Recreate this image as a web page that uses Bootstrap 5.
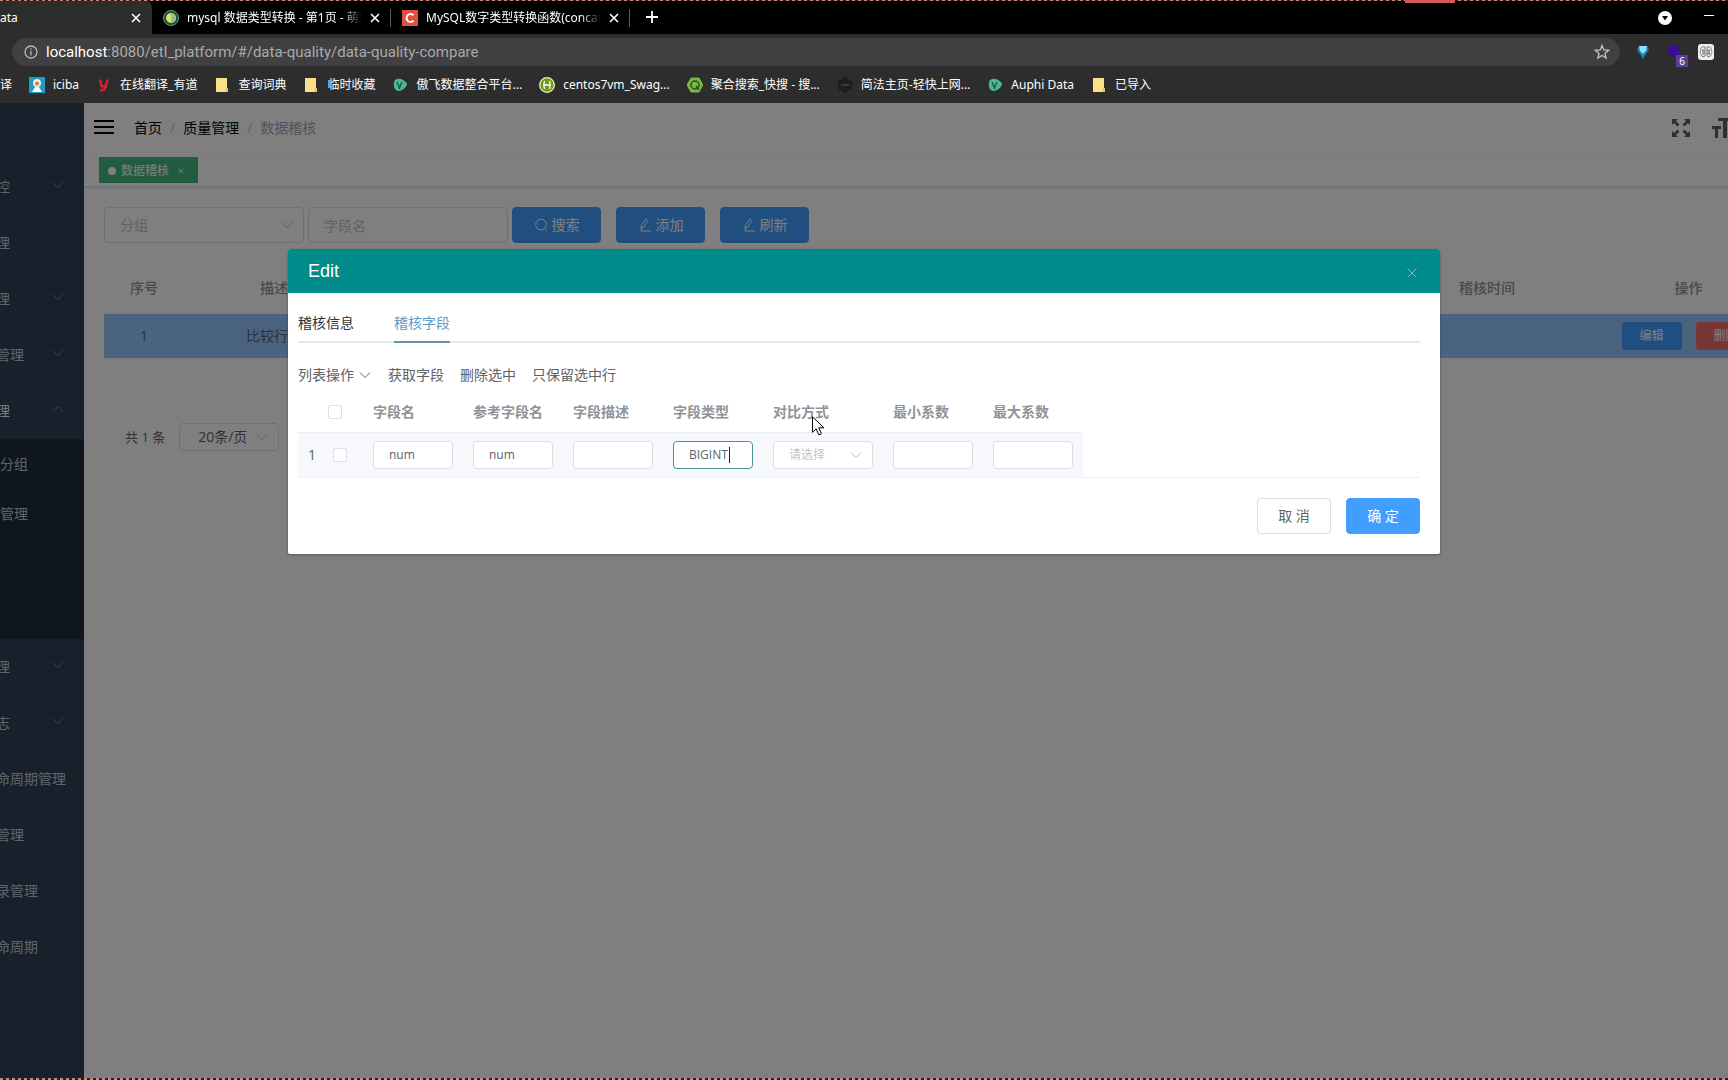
<!DOCTYPE html>
<html lang="zh-CN">
<head>
<meta charset="utf-8">
<meta name="viewport" content="width=device-width, initial-scale=1">
<title>Auphi Data</title>
<link href="https://cdn.jsdelivr.net/npm/bootstrap@5.3.0/dist/css/bootstrap.min.css" rel="stylesheet">
<style>
  :root { --line: #dcdfe6; --hint: #c0c4cc; --blue: #409eff; }
  body { font-family: "Open Sans", "Noto Sans CJK SC", sans-serif; font-size: 14px; line-height: 20px; color: #606266; }
  a { text-decoration: none; color: inherit; }
  svg { flex: none; display: block; }
  .ui-font { font-family: "Liberation Sans", "Noto Sans CJK SC", sans-serif; }

  /* browser chrome */
  .chrome { background: #2d2d2d; color: #fff; font-family: "Noto Sans", "Noto Sans CJK SC", sans-serif; font-size: 12px; line-height: 16px; }
  .tabstrip { height: 34px; background: #000; }
  .tabstrip > * { padding-top: 2px; }
  .tab-on { width: 152px; background: #2d2d2d; border-radius: 0 8px 0 0; padding-right: 11px; }
  .tab-off { width: 239px; padding-left: 11px; padding-right: 12px; }
  .tab-off::after { content: ""; align-self: center; width: 1px; height: 18px; background: #5a5a5a; margin-right: -12px; margin-left: 2px; }
  .tab-title { overflow: hidden; white-space: nowrap; -webkit-mask-image: linear-gradient(90deg, #000 88%, transparent); mask-image: linear-gradient(90deg, #000 88%, transparent); }
  .plain { background: none; border: 0; padding: 0; color: inherit; }
  .win-tools { padding-right: 6px; }
  .toolbar { height: 36px; padding: 0 14px 0 8px; }
  .omnibox { height: 28px; border-radius: 14px; background: #403f41; font-family: Roboto, sans-serif; font-size: 15px; }
  .omnibox .rest { color: #aaa; }
  .ext-badge { right: -6px; bottom: -7px; width: 12px; height: 12px; font-size: 10px; line-height: 12px; background: #5b3f95; text-align: center; }
  .bookmarks { height: 33px; gap: 17px; white-space: nowrap; overflow: hidden; padding-bottom: 4px; }

  /* application */
  .app { background: #fff; }
  .side { width: 84px; background: #304156; color: #bfcbd9; overflow: hidden; padding-top: 56px; line-height: 56px; }
  .side a { height: 56px; margin-left: -4px; padding-right: 20px; white-space: nowrap; }
  .side a svg { margin-bottom: 4px; opacity: .5; }
  .side .on { color: #f4f4f5; }
  .submenu { background: #1f2d3d; height: 200px; line-height: 50px; }
  .submenu a { height: 50px; margin-left: 0; }
  .topline { height: 50px; padding-left: 10px; }
  .crumbs { gap: 8px; padding-left: 4px; }
  .crumbs .sep { color: var(--hint); }
  .crumbs .here { color: #97a8be; }
  .topline .tools { gap: 22px; color: #5a5e66; overflow: hidden; }
  .tagline { height: 34px; padding: 4px 15px; border-bottom: 1px solid #d8dce5; box-shadow: 0 1px 3px rgba(0,0,0,.12); }
  .tag-on { height: 26px; width: 99px; background: #42b983; color: #fff; font-size: 12px; padding: 2px 0 0 9px; gap: 5px; }
  .tag-on i { width: 8px; height: 8px; border-radius: 50%; background: #fff; }
  .workspace { padding: 20px; padding-right: 0; overflow: hidden; }
  .field { height: 36px; width: 200px; border: 1px solid var(--line); border-radius: 4px; padding: 0 15px; background-color: #fff; color: #606266; font-size: 14px; outline: 0; }
  .field::placeholder { color: var(--hint); opacity: 1; }
  select.field { appearance: none; color: var(--hint); background-repeat: no-repeat; background-position: right 10px center; background-image: url("data:image/svg+xml,%3Csvg xmlns='http://www.w3.org/2000/svg' width='12' height='12' fill='none' stroke='%23b4b8c0'%3E%3Cpath d='M1 3.5l5 5 5-5'/%3E%3C/svg%3E"); }
  .field-sm { height: 28px; width: 80px; font-size: 12px; vertical-align: middle; }
  .act { --bs-btn-bg: var(--blue); --bs-btn-border-color: var(--blue); --bs-btn-font-size: 14px; --bs-btn-line-height: 20px; --bs-btn-border-radius: 4px; --bs-btn-padding-x: 0; --bs-btn-padding-y: 0; height: 36px; width: 89px; }
  .act-sm { width: 60px; height: 28px; --bs-btn-font-size: 12px; --bs-btn-border-radius: 3px; }
  .act-red { --bs-btn-bg: #f56c6c; --bs-btn-border-color: #f56c6c; }
  .act-ghost { --bs-btn-bg: #fff; --bs-btn-border-color: #dcdfe6; --bs-btn-color: #606266; }
  .act-end { width: 74px; }
  .act-row { gap: 15px; }
  .act-pair { gap: 14px; }
  .grid-main { table-layout: fixed; width: calc(100% + 77px); margin-top: 20px; text-align: center; white-space: nowrap; }
  .grid-main th { height: 51px; color: #909399; font-weight: 500; padding-bottom: 2px; }
  .grid-main td { height: 44px; background: #94c8fe; padding: 0; }
  .pager { margin-top: 65px; padding-left: 21px; gap: 14px; font-size: 13px; }
  .pager .field { width: 100px; height: 28px; padding: 0 18px; color: #606266; }

  /* dialog */
  .veil { inset: 0; background: rgba(0,0,0,.5); padding-top: 146px; z-index: 5; }
  .dialog { width: 66.667%; background: #fff; border-radius: 2px; box-shadow: 0 1px 3px rgba(0,0,0,.3); overflow: hidden; }
  .dialog-head { height: 44px; background: #008b8b; color: #fff; font-size: 18px; padding: 0 22px 0 20px; }
  .dialog-head button { padding-top: 4px; color: #8fb5ba; }
  .dialog-main { padding: 10px 20px 20px 10px; }
  .pane-tabs { gap: 40px; height: 40px; border-bottom: 2px solid #e4e7ed; color: #303133; line-height: 40px; }
  .pane-tabs .on { height: 40px; color: #5a9bc8; border-bottom: 2px solid #5f97ae; }
  .ops { gap: 16px; height: 64px; margin-bottom: -9px; }
  .grid-fields { width: 785px; table-layout: fixed; white-space: nowrap; }
  .grid-fields th { height: 34px; color: #909399; font-weight: 700; padding: 0 10px 6px; }
  .grid-fields td { height: 45px; padding: 0 10px; background: #f7f8fc; border-top: 1px solid #ebeef5; }
  .grid-fields th.tick { padding-left: 5px; }
  .tickbox { appearance: none; width: 14px; height: 14px; border: 1px solid var(--line); border-radius: 2px; background: #fff; display: block; margin: 0; }
  .field-on { border-color: #4a9496; }
  .caret { left: 56px; top: 6px; width: 1px; height: 16px; background: #222; }
  .grid-wrap { border-bottom: 1px solid #ebeef5; }
  .dialog-end { padding-top: 20px; }
  .pointer { left: 49px; top: 18px; z-index: 2; }

  /* screen recorder frame */
  .rec { inset: 0; z-index: 9; pointer-events: none; }
  .rec i { height: 2px; background: repeating-linear-gradient(90deg, #c08a84 0 3px, #3b1512 3px 6px); }
  .rec i:first-child { height: 1px; }
  .rec b { top: 0; left: 81.3%; width: 50px; height: 3px; background: #cf5a54; }
</style>
</head>
<body class="vh-100 overflow-hidden d-flex flex-column position-relative">

<svg width="0" height="0" class="position-absolute">
  <symbol id="x" viewBox="0 0 10 10"><path d="M1 1l8 8M9 1l-8 8" stroke="currentColor" stroke-width="1.6" fill="none"/></symbol>
  <symbol id="down" viewBox="0 0 12 12"><path d="M1 3.500l5 5 5-5" stroke="currentColor" fill="none"/></symbol>
  <symbol id="folder" viewBox="0 0 16 16"><path d="M2 1h11v9.500l1 1V15H2z" fill="#fbe08a"/><path d="M12 11h2v4h-3z" fill="#e8c565"/></symbol>
  <symbol id="auphi" viewBox="0 0 16 16"><path d="M2 5C3 1.500 8 1 11 3c3 1.500 4 3 4 4.500-1 3-5 6.500-8.500 6.500S1 9.500 2 5z" fill="#4fb78f"/><path d="M5 5l2.500 6L10 5" fill="none" stroke="#1c5f46" stroke-width="1.500"/></symbol>
  <symbol id="pen" viewBox="0 0 14 14"><path d="M3 10.500l.5-3.500 4-5.500q1.500-.8 2.500 1l-4 6.500zM3 10.500V13h10" fill="none" stroke="currentColor"/></symbol>
</svg>

<header class="chrome flex-shrink-0">
  <div class="tabstrip d-flex">
    <div class="tab-on d-flex align-items-center justify-content-between"><span>ata</span><button class="plain" aria-label="关闭标签页"><svg width="10" height="10"><use href="#x"/></svg></button></div>
    <div class="tab-off d-flex align-items-center gap-2">
      <svg width="16" height="16" viewBox="0 0 16 16"><circle cx="8" cy="8" r="7.500" fill="#1e4b33" stroke="#62a36a"/><circle cx="8" cy="8" r="5" fill="#d8df72"/><path d="M8 3a5 5 0 0 1 0 10z" fill="#8fc486"/></svg>
      <span class="tab-title flex-fill">mysql 数据类型转换 - 第1页 - 萌新</span>
      <button class="plain" aria-label="关闭标签页"><svg width="10" height="10"><use href="#x"/></svg></button>
    </div>
    <div class="tab-off d-flex align-items-center gap-2">
      <svg width="16" height="16" viewBox="0 0 16 16"><path d="M0 0h16v16H0z" fill="#e0503c"/><path d="M11.500 5.200A4 4 0 1 0 11.500 10.800" fill="none" stroke="#fff" stroke-width="2"/></svg>
      <span class="tab-title flex-fill">MySQL数字类型转换函数(concat</span>
      <button class="plain" aria-label="关闭标签页"><svg width="10" height="10"><use href="#x"/></svg></button>
    </div>
    <button class="plain ms-3" aria-label="新标签页"><svg width="12" height="12" viewBox="0 0 12 12"><path d="M6 0v12M0 6h12" stroke="#fff" stroke-width="1.800"/></svg></button>
    <div class="win-tools ms-auto d-flex align-items-center">
      <svg width="14" height="14" viewBox="0 0 14 14"><circle cx="7" cy="7" r="7" fill="#fff"/><path d="M4 5h6L7 9.500z" fill="#000"/></svg>
      <svg class="ms-4" width="26" height="14" viewBox="0 0 26 14"><path d="M8 4.500h10" stroke="#fff"/></svg>
    </div>
  </div>
  <div class="toolbar d-flex align-items-center">
    <div class="omnibox d-flex align-items-center flex-fill ms-1 ps-2 pe-2">
      <svg class="ms-1" width="14" height="14" viewBox="0 0 14 14" fill="none" stroke="#b8b8b8" stroke-width="1.300"><circle cx="7" cy="7" r="6"/><path d="M7 6v4.500M7 3.300v1.500"/></svg>
      <div class="flex-fill ps-2" role="textbox" aria-label="地址"><span class="text-white">localhost</span><span class="rest">:8080/etl_platform/#/data-quality/data-quality-compare</span></div>
      <svg width="20" height="16" viewBox="0 0 20 16"><path d="M10 1.500l1.800 4.500 4.900.3-3.800 3.100 1.300 4.700L10 11.500l-4.200 2.600 1.300-4.700L3.300 6.300 8.200 6z" fill="none" stroke="#c4c4c4" stroke-width="1.300"/></svg>
    </div>
    <svg class="ms-3" width="14" height="14" viewBox="0 0 14 14"><path d="M3 1h8l2 3.500L7 14 1 4.500z" fill="#1583b5"/><path d="M3 1h8l-1 5-3 3-3-3z" fill="#8fe0f7"/></svg>
    <div class="position-relative mx-3"><svg width="16" height="16" viewBox="0 0 16 16"><path d="M2 3l6-3 5 3v8l-4 3-8-5z" fill="#3c0d92"/></svg><span class="ext-badge position-absolute">6</span></div>
    <svg width="16" height="16" viewBox="0 0 16 16"><rect width="16" height="16" rx="3" fill="#eee"/><path d="M7 3c-3-1-5 1-4 3-2 2 0 4 0 5 1 2 3 2 4 1zM9 3c3-1 5 1 4 3 2 2 0 4 0 5-1 2-3 2-4 1zM5 5v6M11 5v6M7 7H4M9 7h3M7 9.500H5M9 9.500h3" fill="none" stroke="#777"/></svg>
  </div>
  <nav class="bookmarks d-flex align-items-center" aria-label="书签">
    <a href="#">译</a>
    <a href="#" class="d-flex align-items-center gap-2"><svg width="16" height="16" viewBox="0 0 16 16"><path d="M0 0h16v16H0z" fill="#1f9cc4"/><circle cx="8" cy="6" r="4" fill="#f3ece2"/><circle cx="8" cy="6.500" r="2" fill="#c97d55"/><path d="M3 15l3-5h4l3 5z" fill="#f5f8fa"/></svg>iciba</a>
    <a href="#" class="d-flex align-items-center gap-2"><svg width="16" height="16" viewBox="0 0 16 16"><path d="M4 2.500L5.500 9q2 1.500 4-1M11.500 2.500L9.500 10.500Q8 14 4 13" fill="none" stroke="#d3202c" stroke-width="2.500"/></svg>在线翻译_有道</a>
    <a href="#" class="d-flex align-items-center gap-2"><svg width="16" height="16"><use href="#folder"/></svg>查询词典</a>
    <a href="#" class="d-flex align-items-center gap-2"><svg width="16" height="16"><use href="#folder"/></svg>临时收藏</a>
    <a href="#" class="d-flex align-items-center gap-2"><svg width="16" height="16"><use href="#auphi"/></svg>傲飞数据整合平台...</a>
    <a href="#" class="d-flex align-items-center gap-2"><svg width="16" height="16" viewBox="0 0 16 16"><circle cx="8" cy="8" r="7.300" fill="#6f9a1a" stroke="#e6f0c8" stroke-width="1.300"/><path d="M5.500 4q-1.500 4 0 8M10.500 4q1.500 4 0 8M5 8h6" fill="none" stroke="#fff" stroke-width="1.300"/></svg>centos7vm_Swag...</a>
    <a href="#" class="d-flex align-items-center gap-2"><svg width="16" height="16" viewBox="0 0 16 16"><path d="M4 1h8l4 7-4 7H4L0 8z" fill="#79b648" stroke="#79b648" stroke-linejoin="round"/><circle cx="8" cy="8" r="4" fill="none" stroke="#28521a" stroke-width="1.500"/><path d="M9 9l3 4" stroke="#28521a" stroke-width="1.500"/></svg>聚合搜索_快搜 - 搜...</a>
    <a href="#" class="d-flex align-items-center gap-2"><svg width="16" height="16" viewBox="0 0 16 16"><path d="M8 0l7 4v8l-7 4-7-4V4z" fill="#1e1e1e"/><path d="M4 8h8" stroke="#3a3a3a" stroke-width="2"/></svg>简法主页-轻快上网...</a>
    <a href="#" class="d-flex align-items-center gap-2"><svg width="16" height="16"><use href="#auphi"/></svg>Auphi Data</a>
    <a href="#" class="d-flex align-items-center gap-2"><svg width="16" height="16"><use href="#folder"/></svg>已导入</a>
  </nav>
</header>

<div class="app flex-fill d-flex position-relative overflow-hidden">
  <nav class="side flex-shrink-0" aria-label="主菜单">
    <a href="#" class="d-flex align-items-center justify-content-between">控<svg width="12" height="12"><use href="#down"/></svg></a>
    <a href="#" class="d-flex align-items-center">理</a>
    <a href="#" class="d-flex align-items-center justify-content-between">理<svg width="12" height="12"><use href="#down"/></svg></a>
    <a href="#" class="d-flex align-items-center justify-content-between">管理<svg width="12" height="12"><use href="#down"/></svg></a>
    <a href="#" class="on d-flex align-items-center justify-content-between">理<svg width="12" height="12" viewBox="0 0 12 12"><path d="M1 8.500l5-5 5 5" stroke="#bfcbd9" fill="none"/></svg></a>
    <div class="submenu"><a href="#" class="d-block">分组</a><a href="#" class="d-block">管理</a></div>
    <a href="#" class="d-flex align-items-center justify-content-between">理<svg width="12" height="12"><use href="#down"/></svg></a>
    <a href="#" class="d-flex align-items-center justify-content-between">志<svg width="12" height="12"><use href="#down"/></svg></a>
    <a href="#" class="d-flex align-items-center">命周期管理</a>
    <a href="#" class="d-flex align-items-center">管理</a>
    <a href="#" class="d-flex align-items-center">录管理</a>
    <a href="#" class="d-flex align-items-center">命周期</a>
  </nav>

  <main class="flex-fill overflow-hidden">
    <div class="topline d-flex align-items-center justify-content-between">
      <div class="d-flex align-items-center">
        <button class="plain me-3 text-black" aria-label="菜单"><svg width="20" height="16" viewBox="0 0 20 16"><path d="M0 1h20M0 7h20M0 13h20" stroke="currentColor" stroke-width="2"/></svg></button>
        <nav class="crumbs d-flex" aria-label="位置"><a href="#" class="text-black">首页</a><span class="sep">/</span><a href="#" class="text-black">质量管理</a><span class="sep">/</span><span class="here">数据稽核</span></nav>
      </div>
      <div class="tools d-flex align-items-center">
        <svg width="18" height="18" viewBox="0 0 18 18" fill="currentColor"><path d="M0 0h6L4 2l3.500 3.500-2 2L2 4 0 6zM18 0v6l-2-2-3.500 3.500-2-2L14 2l-2-2zM0 18v-6l2 2 3.500-3.500 2 2L4 16l2 2zM18 18h-6l2-2-3.500-3.500 2-2L16 14l2-2z"/></svg>
        <svg width="16" height="20" viewBox="0 0 16 20" fill="currentColor"><path d="M0 8h9v3H6v9H3v-9H0zM6 0h10v3h-1v17h-4V3H6z"/></svg>
      </div>
    </div>
    <div class="tagline"><a href="#" class="tag-on d-flex align-items-center"><i></i><span class="me-1">数据稽核</span><svg width="6" height="6"><use href="#x"/></svg></a></div>

    <div class="workspace">
      <form class="d-flex">
        <select class="field me-1" aria-label="分组"><option>分组</option></select>
        <input class="field me-1" placeholder="字段名" aria-label="字段名">
        <div class="act-row d-flex">
          <button type="button" class="btn btn-primary act d-flex align-items-center justify-content-center gap-1"><svg width="14" height="14" viewBox="0 0 14 14"><circle cx="7" cy="6.500" r="5.300" fill="none" stroke="#fff"/><path d="M10.500 10.500L13 13" stroke="#fff"/></svg>搜索</button>
          <button type="button" class="btn btn-primary act d-flex align-items-center justify-content-center gap-1"><svg width="14" height="14"><use href="#pen"/></svg>添加</button>
          <button type="button" class="btn btn-primary act d-flex align-items-center justify-content-center gap-1"><svg width="14" height="14"><use href="#pen"/></svg>刷新</button>
        </div>
      </form>
      <table class="grid-main">
        <colgroup><col style="width:80px"><col style="width:180px"><col><col style="width:170px"><col style="width:233px"></colgroup>
        <thead><tr><th>序号</th><th>描述</th><th></th><th>稽核时间</th><th>操作</th></tr></thead>
        <tbody><tr><td>1</td><td>比较行数</td><td></td><td></td><td>
          <div class="act-pair d-flex justify-content-center"><button class="btn btn-primary act act-sm">编辑</button><button class="btn btn-danger act act-sm act-red">删除</button></div>
        </td></tr></tbody>
      </table>
      <div class="pager d-flex align-items-center"><span>共 1 条</span><select class="field" aria-label="每页条数"><option>20条/页</option></select></div>
    </div>
  </main>

  <div class="veil position-absolute">
    <section class="dialog mx-auto" role="dialog" aria-label="Edit">
      <div class="dialog-head ui-font d-flex align-items-center justify-content-between"><span>Edit</span><button class="plain" aria-label="关闭"><svg width="12" height="12" viewBox="0 0 12 12"><path d="M1.500 1.500l9 9M10.500 1.500l-9 9" stroke="currentColor" fill="none"/></svg></button></div>
      <div class="dialog-main">
        <div class="pane-tabs d-flex"><a href="#">稽核信息</a><a href="#" class="on">稽核字段</a></div>
        <div class="ops d-flex align-items-center">
          <a href="#" class="d-flex align-items-center">列表操作<svg class="ms-1" width="14" height="14" viewBox="-1 -1 14 14"><use href="#down" width="12" height="12"/></svg></a>
          <a href="#">获取字段</a><a href="#">删除选中</a><a href="#">只保留选中行</a>
        </div>
        <div class="grid-wrap">
          <table class="grid-fields">
            <colgroup><col style="width:25px"><col style="width:40px"><col><col><col><col><col style="width:120px"><col><col></colgroup>
            <thead><tr><th></th><th class="tick"><input type="checkbox" class="tickbox" aria-label="全选"></th><th>字段名</th><th>参考字段名</th><th>字段描述</th><th>字段类型</th>
              <th class="position-relative">对比方式<svg class="pointer position-absolute" width="13" height="20" viewBox="0 0 13 20"><path d="M.5.8v15.500l3.700-3.500 2.600 6 2.600-1.100-2.600-5.900h5.100z" fill="#fff" stroke="#000"/></svg></th><th>最小系数</th><th>最大系数</th></tr></thead>
            <tbody><tr><td>1</td><td><input type="checkbox" class="tickbox" aria-label="选择第1行"></td>
              <td><input class="field field-sm" value="num" aria-label="字段名"></td>
              <td><input class="field field-sm" value="num" aria-label="参考字段名"></td>
              <td><input class="field field-sm" aria-label="字段描述"></td>
              <td><div class="position-relative"><input class="field field-sm field-on" value="BIGINT" aria-label="字段类型"><span class="caret position-absolute"></span></div></td>
              <td><select class="field field-sm w-100" aria-label="对比方式"><option>请选择</option></select></td>
              <td><input class="field field-sm" aria-label="最小系数"></td>
              <td><input class="field field-sm" aria-label="最大系数"></td></tr></tbody>
          </table>
        </div>
        <div class="dialog-end act-row d-flex justify-content-end">
          <button class="btn act act-end act-ghost">取 消</button>
          <button class="btn btn-primary act act-end">确 定</button>
        </div>
      </div>
    </section>
  </div>
</div>

<div class="rec position-absolute d-flex flex-column justify-content-between"><i></i><b class="position-absolute"></b><i></i></div>
<script src="https://cdn.jsdelivr.net/npm/bootstrap@5.3.0/dist/js/bootstrap.bundle.min.js"></script>
</body>
</html>
